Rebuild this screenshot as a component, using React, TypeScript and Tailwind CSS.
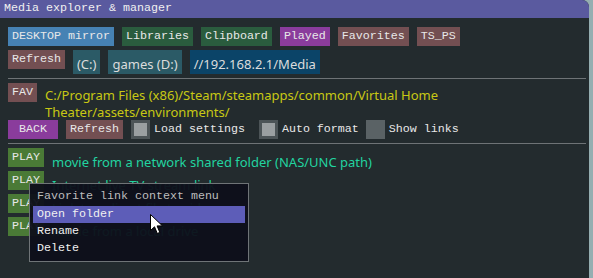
import React from 'react'

const mono = { fontFamily: '"Liberation Mono", "DejaVu Sans Mono", monospace' }
const sans = { fontFamily: '"Noto Sans", "Open Sans", sans-serif' }

function Btn({ label, color }: { label: string; color: string }) {
  return (
    <div
      className={`h-[19px] px-[4px] flex items-center text-[11.667px] leading-none text-[#e8e8e8] whitespace-pre ${color}`}
      style={mono}
    >
      {label}
    </div>
  )
}

function SansBtn({ label, color }: { label: string; color: string }) {
  return (
    <div
      className={`h-[24px] px-[4px] pt-[5px] flex items-center text-[13px] leading-none text-[#dcdcdc] whitespace-pre ${color}`}
      style={sans}
    >
      {label}
    </div>
  )
}

function Check({ label, on }: { label: string; on: boolean }) {
  return (
    <div className="flex items-center gap-[4px]">
      {on ? (
        <div className="w-[19px] h-[19px] bg-[#4c5457] p-[3px]">
          <div className="w-full h-full bg-[#9a9fa1]" />
        </div>
      ) : (
        <div className="w-[19px] h-[19px] bg-[#5a6265]" />
      )}
      <span className="text-[11.667px] text-[#e8e8e8] whitespace-pre" style={mono}>
        {label}
      </span>
    </div>
  )
}

const links = [
  'movie from a network shared folder (NAS/UNC path)',
  'Internet live TV stream link',
  'Link to a direct file to video',
  'movie from a local drive',
]

export default function App() {
  return (
    <div className="w-[593px] h-[278px] bg-[#95aeb1] flex overflow-hidden">
      <div className="relative w-[589px] h-[278px] bg-[#232b2e] rounded-tr-[7px] overflow-hidden flex flex-col">
        {/* title bar */}
        <div
          className="h-[18px] bg-[#5a5a9f] pl-[4px] flex items-center text-[11.667px] text-[#f0f0f0]"
          style={mono}
        >
          Media explorer &amp; manager
        </div>

        <div className="pl-[8px] pt-[9px] flex flex-col">
          <div className="flex gap-[8px]">
            <Btn label="DESKTOP mirror" color="bg-[#4682b4]" />
            <Btn label="Libraries" color="bg-[#2a5c3e]" />
            <Btn label="Clipboard" color="bg-[#2a5c3e]" />
            <Btn label="Played" color="bg-[#8a3c9c]" />
            <Btn label="Favorites" color="bg-[#734f52]" />
            <Btn label="TS_PS" color="bg-[#734f52]" />
          </div>

          <div className="flex items-start gap-[8px] mt-[4px]">
            <Btn label="Refresh" color="bg-[#734f52]" />
            <SansBtn label="(C:)" color="bg-[#2b5a66]" />
            <SansBtn label="games (D:)" color="bg-[#2b5a66]" />
            <SansBtn label="//192.168.2.1/Media" color="bg-[#0b4468]" />
          </div>

          <div className="mt-[4px] h-px w-[578px] bg-[#6e7376]" />

          <div className="flex items-start gap-[8px] mt-[4px]">
            <Btn label="FAV" color="bg-[#734f52]" />
            <div className="pt-[4px] text-[13px] leading-[17px] text-[#c8c814]" style={sans}>
              <div>C:/Program Files (x86)/Steam/steamapps/common/Virtual Home</div>
              <div>Theater/assets/environments/</div>
            </div>
          </div>

          <div className="flex items-center mt-[-1px]">
            <Btn label=" BACK " color="bg-[#8a3c9c]" />
            <div className="ml-[8px]">
              <Btn label="Refresh" color="bg-[#734f52]" />
            </div>
            <div className="ml-[8px]">
              <Check label="Load settings" on />
            </div>
            <div className="ml-[14px]">
              <Check label="Auto format" on />
            </div>
            <div className="ml-[7px]">
              <Check label="Show links" on={false} />
            </div>
          </div>

          <div className="mt-[4px] h-px w-[578px] bg-[#6e7376]" />

          <div className="flex flex-col gap-[4px] mt-[4px]">
            {links.map((l) => (
              <div key={l} className="flex items-start gap-[8px] h-[19px]">
                <Btn label="PLAY" color="bg-[#4a7a36]" />
                <span
                  className="text-[13px] leading-[19px] pt-[5px] text-[#22d4a0] whitespace-pre"
                  style={sans}
                >
                  {l}
                </span>
              </div>
            ))}
          </div>
        </div>

        {/* context menu */}
        <div
          className="absolute left-[29px] top-[183px] w-[220px] h-[79px] border border-[#6f7477] bg-[#0e0f1a]/[0.95] px-[3px] pt-[3px] flex flex-col text-[11.667px]"
          style={mono}
        >
          <div className="h-[19px] pl-[4px] flex items-center text-[#bdbdbd]">Favorite link context menu</div>
          <div className="h-[17px] pl-[4px] flex items-center bg-[#5d5db8] text-[#f0f0f0]">Open folder</div>
          <div className="h-[17px] pl-[4px] flex items-center text-[#f0f0f0]">Rename</div>
          <div className="h-[17px] pl-[4px] flex items-center text-[#f0f0f0]">Delete</div>
        </div>

        {/* mouse cursor */}
        <svg className="absolute left-[150px] top-[214px]" width="14" height="21" viewBox="0 0 14 21">
          <path
            d="M0.5 0.5 L0.5 16.5 L4.5 12.8 L7.3 19.5 L9.8 18.4 L7.1 11.9 L12.5 11.9 Z"
            fill="#ffffff"
            stroke="#000000"
            strokeWidth="1"
          />
        </svg>
      </div>
    </div>
  )
}
